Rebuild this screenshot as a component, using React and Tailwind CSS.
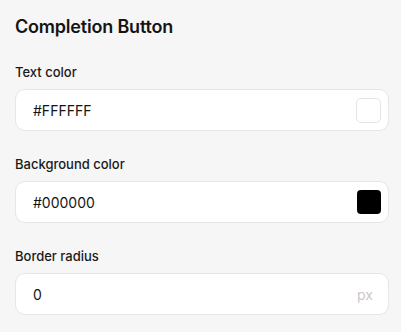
function Field({ label, children }) {
  return (
    <div className="mt-[23px] first:mt-0">
      <div className="text-[13px] leading-5 font-medium text-[#1a1a1a]">{label}</div>
      <div className="mt-[7px] flex h-[42px] w-[374px] items-center justify-between rounded-[10px] border border-[#e6e6e6] bg-white pl-[17px] pr-[7px]">
        {children}
      </div>
    </div>
  );
}

export default function App() {
  return (
    <div
      className="min-h-[332px] bg-[#f6f6f6] px-[15px] pt-[15px] pb-4"
      style={{ fontFamily: 'Inter, "Noto Sans", sans-serif' }}
    >
      <h2 className="text-[18px] leading-6 font-semibold tracking-[-0.2px] text-[#141414]">Completion Button</h2>
      <div className="mt-[23px]">
        <Field label="Text color">
          <span className="text-[14px] text-[#141414]">#FFFFFF</span>
          <span className="h-[25px] w-[25px] rounded-[5px] border border-[#e4e4e4] bg-white" />
        </Field>
        <Field label="Background color">
          <span className="text-[14px] text-[#141414]">#000000</span>
          <span className="h-[24px] w-[24px] rounded-[4px] bg-black" />
        </Field>
        <Field label="Border radius">
          <span className="text-[14px] text-[#141414]">0</span>
          <span className="pr-[8px] text-[14px] text-[#c9c9c9]">px</span>
        </Field>
      </div>
    </div>
  );
}
